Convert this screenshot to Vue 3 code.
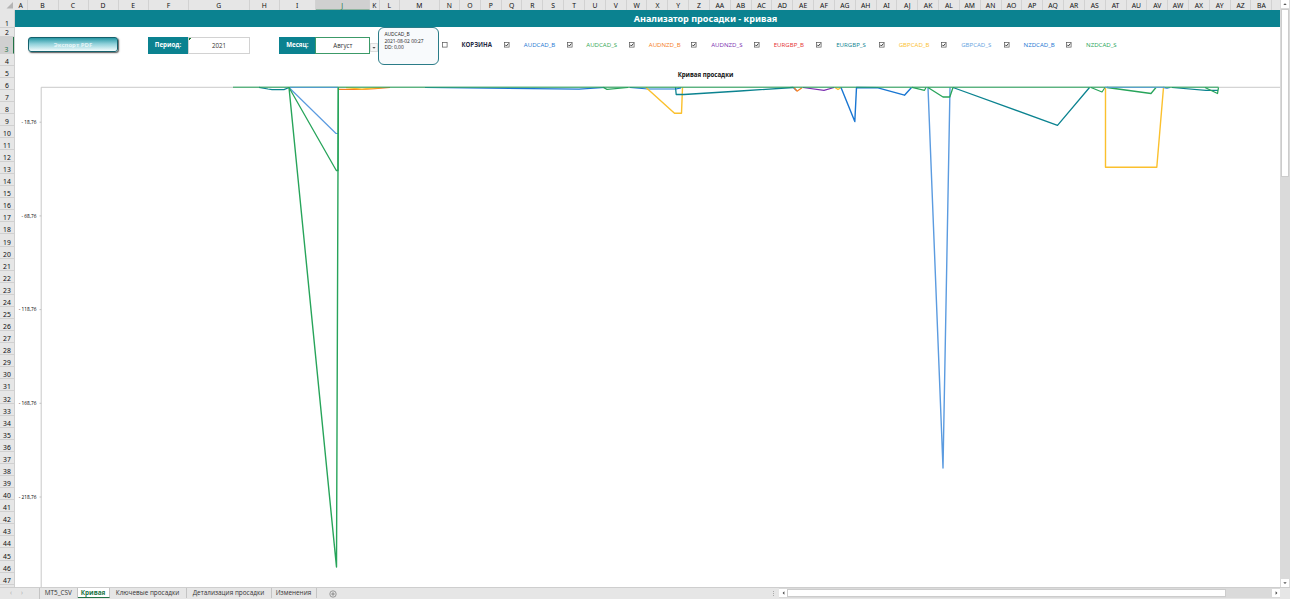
<template>
  <div class="excel">
    <div class="workspace">
      <div class="grid-area">
        <div class="col-row">
          <div class="corner"><svg width="15" height="10" viewBox="0 0 15 10"><path d="M13 2V8.5H6.5Z" fill="#b4b4b4" /></svg></div>
          <div
            v-for="col in columns"
            :key="col.name"
            class="col-head"
            :class="{ active: col.name === 'J' }"
            :style="{ width: col.width + 'px' }"
          >{{ col.name }}</div>
        </div>

        <div class="body-row">
          <div class="row-heads">
            <div
              v-for="row in rows"
              :key="row.n"
              class="row-head"
              :class="{ active: row.n === 3 }"
              :style="{ height: row.height + 'px' }"
            ><span>{{ row.n }}</span></div>
          </div>

          <div class="sheet">
            <div class="title-band"><h1>Анализатор просадки - кривая</h1></div>

            <div class="controls">
              <button class="export-btn"><span>Экспорт PDF</span></button>
              <div class="field period">
                <div class="field-label">Период:</div>
                <div class="field-value marked">2021</div>
              </div>
              <div class="field month">
                <div class="field-label">Месяц:</div>
                <div class="field-value selected">Август</div>
              </div>
              <div class="dropdown"><svg width="8" height="9" viewBox="0 0 8 9"><path d="M2.4 4H5.6L4 5.7Z" fill="#555" /></svg></div>
              <div class="info">
                <div>AUDCAD_B</div>
                <div>2021-08-02 00:27</div>
                <div>DD: 0,00</div>
              </div>
              <div class="legend">
                <div v-for="item in legend" :key="item.name" class="legend-item">
                  <svg class="check" width="6" height="6" viewBox="0 0 6 6">
                    <rect x="0.5" y="0.5" width="4.6" height="4.6" fill="#fff" stroke="#555" stroke-width="0.7" />
                    <path v-if="item.checked" d="M1.4 2.8L2.4 4L4.4 1.6" fill="none" stroke="#222" stroke-width="0.9" />
                  </svg>
                  <span :class="{ bold: !item.checked }" :style="{ color: item.color }">{{ item.name }}</span>
                </div>
              </div>
            </div>

            <div class="chart-title">Кривая просадки</div>

            <svg class="chart" width="1265" height="503" viewBox="15 84 1265 503">
              <path d="M41.2 587V87.3H1280" fill="none" stroke="#c3c3c3" stroke-width="0.9" />
              <g v-for="tick in ticks" :key="tick.label">
                <path :d="`M39.5 ${tick.y}H41.2`" stroke="#b5b5b5" stroke-width="0.8" />
                <text x="36.5" :y="tick.y + 1.6" text-anchor="end" class="tick">{{ tick.label }}</text>
              </g>
              <polyline
                v-for="(line, i) in lines"
                :key="i"
                :points="line.points"
                :stroke="line.color"
                :stroke-width="line.width || 1.2"
                fill="none"
                stroke-linejoin="round"
              />
            </svg>
          </div>
        </div>
      </div>

      <div class="v-scroll">
        <div class="arrow"><svg width="8" height="8" viewBox="0 0 8 8"><path d="M2.3 5L4 3.2L5.7 5Z" fill="#555" /></svg></div>
        <div class="v-thumb"></div>
        <div class="v-track"></div>
        <div class="arrow"><svg width="8" height="8" viewBox="0 0 8 8"><path d="M2.3 3.2H5.7L4 5Z" fill="#555" /></svg></div>
      </div>
    </div>

    <div class="tab-bar">
      <div class="nav-arrows"><span>‹</span><span>›</span></div>
      <div
        v-for="tab in tabs"
        :key="tab.name"
        class="tab"
        :class="{ current: tab.name === 'Кривая' }"
        :style="{ width: tab.width + 'px' }"
      >{{ tab.name }}</div>
      <svg class="add" width="8" height="8" viewBox="0 0 8 8">
        <circle cx="4" cy="4" r="3.2" fill="none" stroke="#777" stroke-width="0.7" />
        <path d="M4 2.2V5.8M2.2 4H5.8" stroke="#777" stroke-width="0.8" />
      </svg>
      <div class="grip"><i></i><i></i><i></i></div>
      <div class="h-scroll">
        <div class="arrow"><svg width="7" height="8" viewBox="0 0 7 8"><path d="M4.4 2.3V5.7L2.6 4Z" fill="#444" /></svg></div>
        <div class="h-thumb"></div>
        <div class="h-track"></div>
        <div class="arrow"><svg width="7" height="8" viewBox="0 0 7 8"><path d="M2.6 2.3V5.7L4.4 4Z" fill="#444" /></svg></div>
      </div>
    </div>
  </div>
</template>

<script setup>
const STEP = 20.83;

// first columns have custom widths, the rest share one
const wide = {
  A: 12.5, B: 31, C: 30, D: 30, E: 30.5, F: 40, G: 60.5, H: 30.5, I: 35.5,
  J: 54.5, K: 9.5, L: 20.5, M: 39.5, N: 20.5,
};

const letters = 'ABCDEFGHIJKLMNOPQRSTUVWXYZ'.split('');
const names = [...letters, ...letters.map((l) => 'A' + l), 'BA'];
const columns = names.map((name) => ({ name, width: wide[name] || STEP }));

const topRows = [17.5, 9.5, 16.5, 12, 12, 12];
const rows = Array.from({ length: 47 }, (_, i) => ({
  n: i + 1,
  height: topRows[i] || 12.08,
}));

const legend = [
  { name: 'КОРЗИНА', color: '#1f2a44', checked: false },
  { name: 'AUDCAD_B', color: '#1976d2', checked: true },
  { name: 'AUDCAD_S', color: '#34a853', checked: true },
  { name: 'AUDNZD_B', color: '#f57c20', checked: true },
  { name: 'AUDNZD_S', color: '#7b2fb0', checked: true },
  { name: 'EURGBP_B', color: '#e53030', checked: true },
  { name: 'EURGBP_S', color: '#0b8390', checked: true },
  { name: 'GBPCAD_B', color: '#fbc02d', checked: true },
  { name: 'GBPCAD_S', color: '#64a3e0', checked: true },
  { name: 'NZDCAD_B', color: '#1976d2', checked: true },
  { name: 'NZDCAD_S', color: '#27a45a', checked: true },
];

const ticks = [
  { label: '- 18,76', y: 122.2 },
  { label: '- 68,76', y: 215.9 },
  { label: '- 118,76', y: 309.6 },
  { label: '- 168,76', y: 403.3 },
  { label: '- 218,76', y: 497 },
];

const lines = [
  { color: '#5b9be0', points: '289,87.5 338,87.5' },
  { color: '#5b9be0', points: '289.5,88 336,133.5 338,133.5' },
  { color: '#0b8390', points: '259,87.3 268,89 272,89.6 284,89.6 289,87.5' },
  { color: '#f57c20', points: '338.5,89.4 362,89.5 375,88.6 390,87.5' },
  { color: '#fbc02d', points: '346,87.6 362,89.2 372,88.2 382,87.5' },
  { color: '#1976d2', points: '425,87.5 579,89.2 605,87.5' },
  { color: '#1976d2', points: '630,87.5 648,89 676,89 681,87.8' },
  { color: '#27a45a', points: '603,87.3 607,89.4 628,87.5' },
  { color: '#fbc02d', width: 1.4, points: '646,87.5 674.5,113.3 681.5,113.3 682.5,87.5' },
  { color: '#0b8390', width: 1.3, points: '675.5,87.3 676.2,94.5 684,94.5 740,91 793,87.5' },
  { color: '#1976d2', points: '793,87.3 796.5,90.5' },
  { color: '#f57c20', points: '794,87.5 797,91.2 802,87.7' },
  { color: '#7b2fb0', points: '803,87.5 824,90.4 834,87.5' },
  { color: '#fbc02d', points: '835,87.5 838,89.6 841,87.6' },
  { color: '#1976d2', width: 1.4, points: '841,87.5 854.8,121.6 856.5,87.5 878,87.8 904.5,95.2 911.5,87.5' },
  { color: '#27a45a', points: '912,87.3 924.5,90.3 926,87.5' },
  { color: '#5b9be0', width: 1.4, points: '928,87.5 943,468 950,87.5' },
  { color: '#27a45a', width: 1.3, points: '928,87.5 943,97 949.8,97 953,87.5' },
  { color: '#0b8390', width: 1.3, points: '953,87.5 1057.5,125.3 1089.5,87.5' },
  { color: '#27a45a', points: '1091,87.5 1102,92 1105,87.5' },
  { color: '#fbc02d', width: 1.4, points: '1105.5,87.5 1105.5,167.2 1156.8,167.2 1163.5,87.5' },
  { color: '#27a45a', width: 1.3, points: '1107,87.5 1151,93.5 1156,87.5' },
  { color: '#5b9be0', points: '1163,87.3 1167,88.3 1170,87.5' },
  { color: '#0b8390', points: '1172,87.5 1206,90.4 1218,90.4' },
  { color: '#27a45a', width: 1.3, points: '1205,87.5 1217.5,93.5 1218.5,87.5' },
  // baseline
  { color: '#27a45a', width: 1, points: '233,87.2 1218.5,87.2' },
  { color: '#5b9be0', width: 1, points: '290,87.3 338,87.3' },
  { color: '#5b9be0', width: 1, points: '1105,87.3 1165,87.3' },
  // deepest drawdowns
  { color: '#27a45a', width: 1.3, points: '289,87.5 336.3,170.5 338,170.5 338.3,87.5' },
  { color: '#27a45a', width: 1.4, points: '289,87.5 336.5,567 338.3,87.5' },
];

const tabs = [
  { name: 'MT5_CSV', width: 37.5 },
  { name: 'Кривая', width: 32 },
  { name: 'Ключевые просадки', width: 77 },
  { name: 'Детализация просадки', width: 85 },
  { name: 'Изменения', width: 45 },
];
</script>

<style>
body {
  margin: 0;
  overflow: hidden;
}
</style>

<style scoped>
* {
  box-sizing: border-box;
}

.excel {
  width: 1290px;
  height: 599px;
  display: flex;
  flex-direction: column;
  overflow: hidden;
  background: #fff;
  font-family: "Open Sans", "Noto Sans", sans-serif;
  color: #333;
}

.workspace {
  display: flex;
  height: 587px;
}

.grid-area {
  width: 1280px;
  overflow: hidden;
}

/* column headers */
.col-row {
  display: flex;
  height: 10px;
  background: #e6e6e6;
  overflow: hidden;
}

.corner {
  width: 15px;
  height: 10px;
  flex-shrink: 0;
}

.corner svg {
  display: block;
}

.col-head {
  flex-shrink: 0;
  height: 10px;
  border-right: 1px solid #d2d2d2;
  font-family: "Noto Sans", sans-serif;
  font-size: 6.8px;
  line-height: 11px;
  text-align: center;
  color: #111;
  white-space: nowrap;
}

.col-head.active {
  background: #d0d0d0;
  border-bottom: 1px solid #8fb5a0;
  color: #217346;
}

.body-row {
  display: flex;
  height: 577px;
}

/* row headers */
.row-heads {
  width: 15px;
  flex-shrink: 0;
  background: #e6e6e6;
  border-right: 1px solid #cfcfcf;
  overflow: hidden;
}

.row-head {
  display: flex;
  align-items: flex-end;
  justify-content: center;
  border-bottom: 1px solid #d0d0d0;
  font-family: "Noto Sans", sans-serif;
  font-size: 6.8px;
  line-height: 7px;
  color: #111;
}

.row-head.active {
  background: #d0d0d0;
  border-right: 1px solid #217346;
  color: #217346;
}

.sheet {
  width: 1265px;
  height: 577px;
}

.title-band {
  height: 17px;
  background: #0b8290;
  padding-left: 116px;
  text-align: center;
}

.title-band h1 {
  margin: 0;
  font-family: "Noto Sans", sans-serif;
  font-size: 9.05px;
  line-height: 17px;
  font-weight: 700;
  color: #fff;
}

.controls {
  display: flex;
  align-items: flex-start;
  height: 39px;
}

.export-btn {
  width: 90px;
  height: 15px;
  margin: 10px 0 0 13px;
  padding: 0;
  border: 1px solid #15616c;
  border-radius: 3px;
  background: linear-gradient(#2797a4, #8ed0d9 45%, #f4fcfd);
  box-shadow: 1px 1px 1.5px #555;
  font-family: inherit;
  font-size: 6px;
  line-height: 12px;
  font-weight: 700;
  color: #fff;
}

.export-btn span {
  opacity: 0.75;
}

.field {
  display: flex;
  height: 17px;
  margin-top: 9.5px;
  font-size: 6.2px;
  line-height: 16px;
  text-align: center;
}

.period {
  width: 102px;
  margin-left: 30px;
}

.month {
  width: 91px;
  margin-left: 29.4px;
}

.field-label {
  background: #0b8290;
  color: #fff;
  font-weight: 700;
}

.period .field-label {
  width: 40px;
}

.month .field-label {
  width: 36px;
}

.field-value {
  flex: 1;
  border: 1px solid #d2d2d2;
  line-height: 15px;
}

.field-value.marked {
  background: linear-gradient(135deg, #1a7a2e 1.5px, transparent 1.5px);
}

.field-value.selected {
  border-color: #3c9a68;
}

.dropdown {
  width: 8px;
  height: 9px;
  margin-top: 16px;
  border: 1px solid #ddd;
  background: #f6f6f6;
}

.dropdown svg {
  display: block;
  margin: -1px;
}

.info {
  width: 61px;
  height: 38px;
  margin: 0;
  padding: 3px 0 0 5px;
  border: 1px solid #2b7c88;
  border-radius: 6px;
  background: #f8fafc;
  font-size: 4.9px;
  line-height: 6.6px;
  color: #222;
  white-space: nowrap;
}

.legend {
  display: flex;
  margin-left: 2.2px;
}

.legend-item {
  display: flex;
  align-items: center;
  width: 62.48px;
  height: 10px;
  margin-top: 13px;
  font-size: 6.1px;
  line-height: 10px;
  white-space: nowrap;
}

.check {
  margin-right: 13.8px;
  flex-shrink: 0;
}

.bold {
  font-weight: 700;
}

.chart-title {
  height: 18px;
  padding-left: 116px;
  text-align: center;
  font-size: 6.1px;
  line-height: 17px;
  font-weight: 700;
  color: #111;
}

.chart {
  display: block;
}

.tick {
  font-size: 4.8px;
  font-weight: 500;
  fill: #000;
}

/* scroll bars */
.v-scroll {
  display: flex;
  flex-direction: column;
  width: 10px;
  padding: 0 1px;
  background: #dadada;
}

.arrow {
  flex-shrink: 0;
  display: flex;
  align-items: center;
  justify-content: center;
  width: 8px;
  height: 8px;
  background: #fff;
}

.v-thumb {
  height: 168px;
  margin-top: 1px;
  background: #fff;
  border: 1px solid #ccc;
}

.v-track {
  flex: 1;
}

.tab-bar {
  display: flex;
  height: 12px;
  background: #e6e6e6;
  border-top: 1px solid #cecece;
  font-size: 6.4px;
  line-height: 10px;
  color: #333;
}

.nav-arrows {
  display: flex;
  gap: 9px;
  width: 40px;
  padding-left: 10px;
  border-right: 1px solid #c4c4c4;
  color: #aaa;
}

.tab {
  flex-shrink: 0;
  height: 10px;
  border-right: 1px solid #c4c4c4;
  text-align: center;
  white-space: nowrap;
}

.tab.current {
  background: #fff;
  border-bottom: 1px solid #217346;
  font-weight: 700;
  color: #217346;
}

.add {
  margin: 1.5px 0 0 12.5px;
}

.grip {
  display: flex;
  flex-direction: column;
  gap: 1px;
  margin: 3px 5px 0 auto;
}

.grip i {
  width: 1px;
  height: 1px;
  background: #aaa;
}

.h-scroll {
  display: flex;
  align-items: center;
  width: 501px;
  height: 10px;
  margin-right: 10px;
  background: #dadada;
}

.h-thumb {
  width: 439px;
  height: 8px;
  background: #fff;
  border: 1px solid #ccc;
}

.h-track {
  flex: 1;
}
</style>
